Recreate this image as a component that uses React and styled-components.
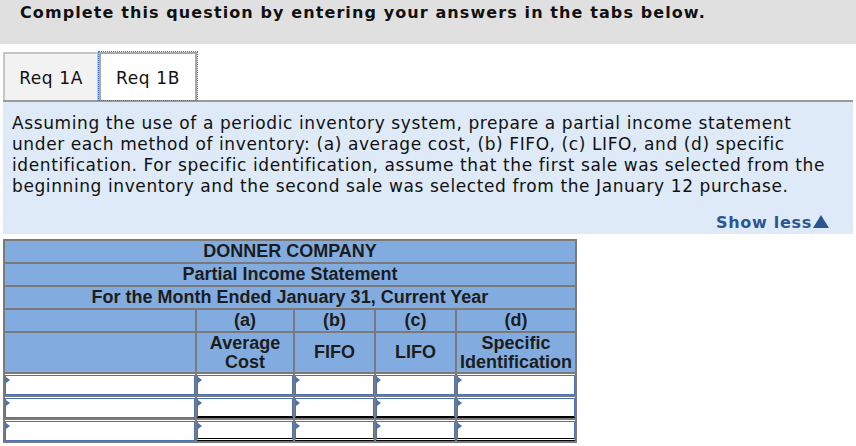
import React from "react";
import styled, { createGlobalStyle } from "styled-components";

const Global = createGlobalStyle`
  body {
    margin: 0;
    background: #fff;
    font-family: "DejaVu Sans", Verdana, sans-serif;
    color: #111;
  }
`;

const TopBar = styled.div`
  height: 44px;
  background: #e0e0e0;
  box-sizing: border-box;
  padding: 2px 0 0 20px;
  font-weight: bold;
  font-size: 16px;
  letter-spacing: 1.1px;
  line-height: 21px;
  color: #111;
  white-space: nowrap;
`;

const Page = styled.div`
  padding: 0 3px;
`;

const Tabs = styled.div`
  display: flex;
  margin-top: 8px;
  height: 48px;
  border-bottom: 2px solid #9a9a9a;
`;

const Tab = styled.div`
  box-sizing: border-box;
  width: ${(p) => p.$w}px;
  display: flex;
  align-items: center;
  justify-content: center;
  font-size: 17px;
  letter-spacing: 0.6px;
  background: ${(p) => (p.$active ? "#fff" : "#f2f2f2")};
  border: 2px solid ${(p) => (p.$active ? "#a8a8a8" : "#c6c6c6")};
  border-bottom: none;
  outline: ${(p) => (p.$active ? "1px dotted #3a6fc4" : "none")};
  padding-top: 2px;
`;

const Panel = styled.div`
  background: #deeaf7;
  box-sizing: border-box;
  height: 132px;
  padding: 11px 9px 0 9px;
  font-size: 17px;
  letter-spacing: 0.6px;
  line-height: 21px;
  white-space: nowrap;
`;

const ShowLess = styled.div`
  display: flex;
  justify-content: flex-end;
  align-items: center;
  gap: 1px;
  padding-right: 15px;
  margin-top: 15px;
  font-weight: bold;
  font-size: 16px;
  letter-spacing: 0.7px;
  color: #2b5591;
`;

const Arrow = styled.span`
  display: inline-block;
  width: 0;
  height: 0;
  border-left: 8px solid transparent;
  border-right: 8px solid transparent;
  border-bottom: 13px solid #2b5591;
  margin-top: -2px;
`;

const Table = styled.table`
  margin-top: 5px;
  border-collapse: collapse;
  border: 2px solid #7a7a7a;
  font-family: "Liberation Sans", Arial, sans-serif;
  font-weight: bold;
  font-size: 18px;
  color: #1c1c1c;
  table-layout: fixed;
`;

const Head = styled.td`
  background: #82ace0;
  border: 2px solid #7a7a7a;
  text-align: center;
  padding: 0;
  height: ${(p) => p.$h || 21}px;
  line-height: 19px;
  white-space: nowrap;
`;

const InputCell = styled.td`
  border: 2px solid #7a7a7a;
  padding: 0;
  height: 21px;
  background: #fff;
`;

const Field = styled.div`
  position: relative;
  box-sizing: border-box;
  height: 20px;
  background: #fff;
  border: 1px solid #4a72b4;
  border-bottom: ${(p) =>
    p.$rule === "single"
      ? "2px solid #000"
      : p.$rule === "double"
      ? "3px double #000"
      : "1px solid #4a72b4"};
  &::before {
    content: "";
    position: absolute;
    left: 0;
    top: 1px;
    border-left: 4px solid #4a72b4;
    border-top: 3px solid transparent;
    border-bottom: 3px solid transparent;
  }
`;

const widths = [192, 98, 81, 81, 120];
const rows = ["", "single", "double"];

export default function App() {
  return (
    <>
      <Global />
      <TopBar>Complete this question by entering your answers in the tabs below.</TopBar>
      <Page>
        <Tabs>
          <Tab $w={96}>Req 1A</Tab>
          <Tab $w={98} $active>Req 1B</Tab>
        </Tabs>
        <Panel>
          Assuming the use of a periodic inventory system, prepare a partial income statement
          <br />
          under each method of inventory: (a) average cost, (b) FIFO, (c) LIFO, and (d) specific
          <br />
          identification. For specific identification, assume that the first sale was selected from the
          <br />
          beginning inventory and the second sale was selected from the January 12 purchase.
          <ShowLess>
            Show less<Arrow />
          </ShowLess>
        </Panel>
        <Table>
          <colgroup>
            {widths.map((w, i) => (
              <col key={i} style={{ width: w }} />
            ))}
          </colgroup>
          <tbody>
            <tr><Head colSpan={5}>DONNER COMPANY</Head></tr>
            <tr><Head colSpan={5}>Partial Income Statement</Head></tr>
            <tr><Head colSpan={5}>For the Month Ended January 31, Current Year</Head></tr>
            <tr>
              <Head />
              <Head>(a)</Head>
              <Head>(b)</Head>
              <Head>(c)</Head>
              <Head>(d)</Head>
            </tr>
            <tr>
              <Head $h={39} />
              <Head $h={39}>Average<br />Cost</Head>
              <Head $h={39}>FIFO</Head>
              <Head $h={39}>LIFO</Head>
              <Head $h={39}>Specific<br />Identification</Head>
            </tr>
            {rows.map((rule, r) => (
              <tr key={r}>
                {widths.map((_, c) => (
                  <InputCell key={c}>
                    <Field $rule={c > 0 ? rule : ""} />
                  </InputCell>
                ))}
              </tr>
            ))}
          </tbody>
        </Table>
      </Page>
    </>
  );
}
